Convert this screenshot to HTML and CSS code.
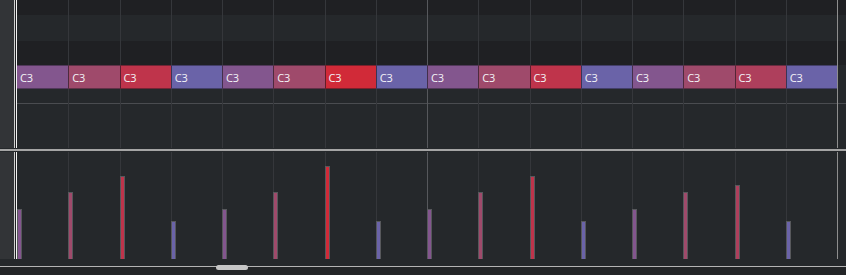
FILE: index.html
```html
<!DOCTYPE html>
<html>
<head>
<meta charset="utf-8">
<link rel="stylesheet" href="styles.css">
</head>
<body>
<div class="app">
  <div class="pane upper">
    <div class="gutter"></div>
    <div class="edge"></div>
    <div class="field">
      <div class="rows">
        <div class="row dark r15"></div>
        <div class="row light r26"></div>
        <div class="row dark r24"></div>
        <div class="row light r24"></div>
        <div class="row light r14"></div>
        <div class="row hline"></div>
        <div class="row light rfill"></div>
      </div>
      <div class="cols">
        <div class="col"></div><div class="col"></div><div class="col"></div><div class="col"></div>
        <div class="col"></div><div class="col"></div><div class="col"></div><div class="col"></div>
        <div class="col bar"></div><div class="col"></div><div class="col"></div><div class="col"></div>
        <div class="col"></div><div class="col"></div><div class="col"></div><div class="col"></div>
      </div>
      <div class="endline"></div>
      <div class="notes">
        <div class="note purple">C3</div>
        <div class="note mauve">C3</div>
        <div class="note red">C3</div>
        <div class="note blue">C3</div>
        <div class="note purple">C3</div>
        <div class="note mauve">C3</div>
        <div class="note bright">C3</div>
        <div class="note blue">C3</div>
        <div class="note purple">C3</div>
        <div class="note mauve">C3</div>
        <div class="note red">C3</div>
        <div class="note blue">C3</div>
        <div class="note purple">C3</div>
        <div class="note mauve">C3</div>
        <div class="note rose">C3</div>
        <div class="note blue">C3</div>
      </div>
    </div>
  </div>
  <div class="sep"></div>
  <div class="pane lower">
    <div class="gutter"></div>
    <div class="edge"></div>
    <div class="field lowfield">
      <div class="cols vel">
        <div class="col"><div class="vbar purple" style="height:50px"></div></div>
        <div class="col"><div class="vbar mauve" style="height:67px"></div></div>
        <div class="col"><div class="vbar red" style="height:83px"></div></div>
        <div class="col"><div class="vbar blue" style="height:38px"></div></div>
        <div class="col"><div class="vbar purple" style="height:50px"></div></div>
        <div class="col"><div class="vbar mauve" style="height:67px"></div></div>
        <div class="col"><div class="vbar bright" style="height:93px"></div></div>
        <div class="col"><div class="vbar blue" style="height:38px"></div></div>
        <div class="col bar"><div class="vbar purple" style="height:50px"></div></div>
        <div class="col"><div class="vbar mauve" style="height:67px"></div></div>
        <div class="col"><div class="vbar red" style="height:83px"></div></div>
        <div class="col"><div class="vbar blue" style="height:38px"></div></div>
        <div class="col"><div class="vbar purple" style="height:50px"></div></div>
        <div class="col"><div class="vbar mauve" style="height:67px"></div></div>
        <div class="col"><div class="vbar rose" style="height:74px"></div></div>
        <div class="col"><div class="vbar blue" style="height:38px"></div></div>
      </div>
      <div class="endline"></div>
    </div>
  </div>
  <div class="strip"></div>
  <div class="track"><div class="thumb"></div></div>
  <div class="bottom"></div>
</div>
</body>
</html>
```

FILE: styles.css
```css
* { box-sizing: border-box; }
html, body {
  margin: 0;
  width: 846px;
  height: 275px;
  overflow: hidden;
  background: #232527;
  font-family: "Open Sans", "Noto Sans", sans-serif;
}
.app {
  display: flex;
  flex-direction: column;
  width: 846px;
}
.pane { display: flex; }
.upper { height: 148px; }
.lower { height: 107px; }
.gutter {
  width: 14px;
  flex: 0 0 14px;
  background: #323437;
}
.edge {
  width: 3px;
  flex: 0 0 3px;
  background: linear-gradient(to right, #cfcfcf 0 1px, #1e1f22 1px 2px, #f2f2f2 2px 3px);
}
.field {
  flex: 1;
  display: grid;
  grid-template-columns: 820px 1px 1fr;
  grid-template-rows: 100%;
}
.lowfield { background: #25282b; }
.rows {
  grid-area: 1 / 1 / 2 / 4;
  display: flex;
  flex-direction: column;
}
.row.dark { background: #1f2023; }
.row.light { background: #25282b; }
.r15 { height: 15px; }
.r26 { height: 26px; }
.r24 { height: 24px; }
.r14 { height: 14px; }
.hline { height: 1px; background: #4a4c50; }
.rfill { flex: 1; }
.cols {
  grid-area: 1 / 1;
  display: flex;
}
.col {
  flex: 0 0 51.25px;
  min-width: 0;
  display: flex;
  align-items: flex-end;
}
.col + .col { border-left: 1px solid #35373b; }
.col.bar { border-left-color: #56585c; }
.endline {
  grid-area: 1 / 2;
  background: #8e8e8e;
}
.notes {
  grid-area: 1 / 1;
  align-self: start;
  margin-top: 65px;
  height: 24px;
  display: flex;
}
.note {
  flex: 0 0 51.25px;
  min-width: 0;
  display: flex;
  align-items: center;
  padding-left: 3px;
  color: #f4f4f8;
  font-size: 11px;
  letter-spacing: -0.2px;
  border-top: 1px solid rgba(20, 20, 28, 0.45);
  border-bottom: 1px solid rgba(20, 20, 28, 0.45);
}
.note + .note { border-left: 1px solid rgba(25, 22, 32, 0.6); }
.purple { background: #83568e; }
.mauve { background: #9f4a6b; }
.red { background: #bf344b; }
.blue { background: #6a63a8; }
.bright { background: #d12a38; }
.rose { background: #ae3f5c; }
.vbar {
  width: 5px;
  flex: 0 0 5px;
  border: 1px solid #57585c;
  border-bottom: 0;
}
.col + .col .vbar { margin-left: -1px; }
.sep {
  height: 4px;
  background: linear-gradient(#25282b 0 1px, #a5a5a5 1px 3px, #25282b 3px 4px);
}
.strip {
  height: 6px;
  background: #25282b;
}
.track {
  height: 5px;
  display: flex;
  background: linear-gradient(#25282b 0 1px, #b4b4b4 1px 2px, #232527 2px 5px);
}
.thumb {
  margin-left: 216px;
  width: 32px;
  height: 5px;
  border-radius: 3px;
  background: #c6c6c6;
}
.bottom {
  height: 5px;
  background: #232527;
}
```
